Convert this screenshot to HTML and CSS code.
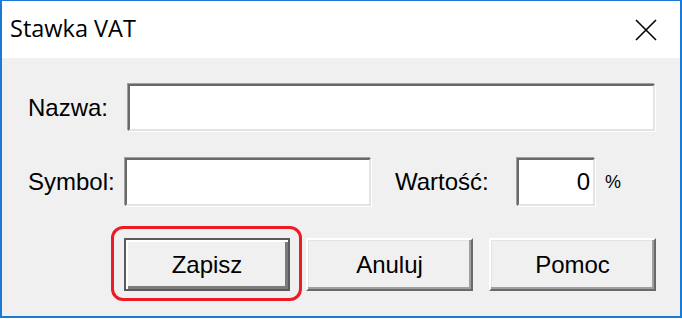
FILE: index.html
```html
<!DOCTYPE html>
<html lang="pl">
  <head>
    <meta charset="UTF-8" />
    <title>Stawka VAT</title>
    <link rel="stylesheet" href="styles.css">
  </head>
  <body>
    <div class="window">
      <div class="titlebar">
        <span class="title">Stawka VAT</span>
        <svg class="close" width="22" height="22" viewBox="0 0 22 22">
          <path d="M1 1 L21 21 M21 1 L1 21" stroke="#000" stroke-width="1.6" fill="none"/>
        </svg>
      </div>
      <div class="content">
        <div class="row">
          <label class="lbl lbl-nazwa">Nazwa:</label>
          <input class="field field-nazwa" type="text">
        </div>
        <div class="row row-symbol">
          <label class="lbl lbl-symbol">Symbol:</label>
          <input class="field field-symbol" type="text">
          <label class="lbl lbl-wartosc">Wartość:</label>
          <input class="field field-wartosc" type="text" value="0">
          <span class="percent">%</span>
        </div>
        <div class="buttons">
          <div class="highlight">
            <button class="btn btn-default">Zapisz</button>
          </div>
          <button class="btn">Anuluj</button>
          <button class="btn">Pomoc</button>
        </div>
      </div>
    </div>
  </body>
</html>
```

FILE: styles.css
```css
html,
body {
  margin: 0;
  background-color: #ffffff;
}
.window {
  width: 682px;
  height: 318px;
  box-sizing: border-box;
  border: 2px solid #1c7ad6;
  border-top-width: 1px;
  display: flex;
  flex-direction: column;
  font-family: "Liberation Sans", Arial, sans-serif;
}
.titlebar {
  height: 57px;
  background-color: #ffffff;
  display: flex;
  align-items: center;
  justify-content: space-between;
}
.title {
  font-family: "Open Sans", "Noto Sans", sans-serif;
  font-size: 23.5px;
  color: #000;
  padding-left: 8px;
  padding-bottom: 3px;
}
.close {
  margin-right: 23px;
}
.content {
  flex: 1;
  background-color: #f0f0f0;
  padding: 26px 0 0 26px;
}
.row {
  display: flex;
  align-items: center;
}
.row-symbol {
  margin-top: 27px;
}
.lbl {
  font-size: 24px;
  color: #000;
}
.lbl-nazwa {
  width: 100px;
}
.lbl-symbol {
  width: 97px;
}
.lbl-wartosc {
  width: 122px;
  margin-left: 24px;
}
.field {
  box-sizing: border-box;
  height: 48px;
  background-color: #ffffff;
  border-style: solid;
  border-width: 2px;
  border-color: #696969 #e3e3e3 #e3e3e3 #696969;
  box-shadow: -1px -1px 0 #a0a0a0, 1px 1px 0 #ffffff;
  font-family: "Liberation Sans", Arial, sans-serif;
  font-size: 24px;
  padding: 0 4px;
  outline: none;
}
.field-nazwa {
  width: 527px;
  height: 47px;
}
.field-symbol {
  width: 246px;
}
.field-wartosc {
  width: 78px;
  text-align: right;
  padding-right: 3px;
}
.percent {
  margin-left: 10px;
  font-size: 18px;
  color: #000;
}
.buttons {
  display: flex;
  margin-top: 32px;
  padding-left: 96px;
  gap: 16px;
}
.btn {
  box-sizing: border-box;
  width: 167px;
  height: 53px;
  background-color: #f0f0f0;
  font-family: "Liberation Sans", Arial, sans-serif;
  font-size: 24px;
  color: #000;
  border-style: solid;
  border-width: 2px;
  border-color: #ffffff #696969 #696969 #ffffff;
  box-shadow: inset -2px -2px 0 #a0a0a0, inset 1px 1px 0 #e3e3e3;
  padding: 0;
}
.btn-default {
  width: 166px;
  border-color: #5a5a5a;
  box-shadow: inset 2px 2px 0 #ffffff, inset -3px -3px 0 #7a7a7a;
}
.highlight {
  position: relative;
}
.highlight::after {
  content: "";
  position: absolute;
  top: -12px;
  left: -13px;
  right: -12px;
  bottom: -10px;
  border: 3px solid #ec1c24;
  border-radius: 12px;
  pointer-events: none;
}
```
